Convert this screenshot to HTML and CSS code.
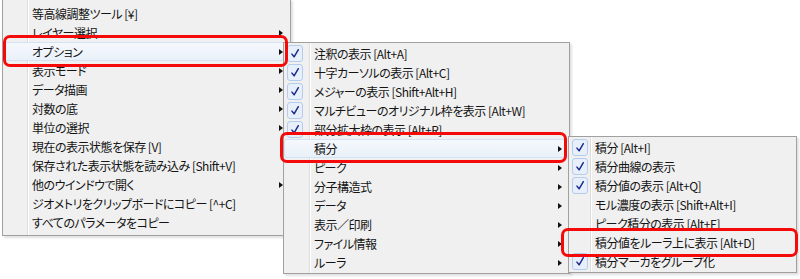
FILE: index.html
```html
<!DOCTYPE html>
<html lang="ja">
<head>
<meta charset="utf-8">
<title>メニュー</title>
<link rel="stylesheet" href="styles.css">
</head>
<body>
<div class="stage">
  <div class="menu m1">
    <div class="item"><span class="gut"></span><span class="label">等高線調整ツール [¥]</span><span></span></div>
    <div class="item"><span class="gut"></span><span class="label">レイヤー選択</span><span class="sub"></span></div>
    <div class="item hot"><span class="gut"></span><span class="label">オプション</span><span class="sub"></span></div>
    <div class="item"><span class="gut"></span><span class="label">表示モード</span><span class="sub"></span></div>
    <div class="item"><span class="gut"></span><span class="label">データ描画</span><span class="sub"></span></div>
    <div class="item"><span class="gut"></span><span class="label">対数の底</span><span class="sub"></span></div>
    <div class="item"><span class="gut"></span><span class="label">単位の選択</span><span class="sub"></span></div>
    <div class="item"><span class="gut"></span><span class="label">現在の表示状態を保存 [V]</span><span></span></div>
    <div class="item"><span class="gut"></span><span class="label">保存された表示状態を読み込み [Shift+V]</span><span></span></div>
    <div class="item"><span class="gut"></span><span class="label">他のウインドウで開く</span><span class="sub"></span></div>
    <div class="item"><span class="gut"></span><span class="label">ジオメトリをクリップボードにコピー [^+C]</span><span></span></div>
    <div class="item"><span class="gut"></span><span class="label">すべてのパラメータをコピー</span><span></span></div>
  </div>

  <div class="menu m2">
    <div class="item"><span class="gut"><span class="chk"><svg viewBox="0 0 16 17"><path d="M4.5 9.2 L7 12.3 L11.8 4.2"/></svg></span></span><span class="label">注釈の表示 [Alt+A]</span><span></span></div>
    <div class="item"><span class="gut"><span class="chk"><svg viewBox="0 0 16 17"><path d="M4.5 9.2 L7 12.3 L11.8 4.2"/></svg></span></span><span class="label">十字カーソルの表示 [Alt+C]</span><span></span></div>
    <div class="item"><span class="gut"><span class="chk"><svg viewBox="0 0 16 17"><path d="M4.5 9.2 L7 12.3 L11.8 4.2"/></svg></span></span><span class="label">メジャーの表示 [Shift+Alt+H]</span><span></span></div>
    <div class="item"><span class="gut"><span class="chk"><svg viewBox="0 0 16 17"><path d="M4.5 9.2 L7 12.3 L11.8 4.2"/></svg></span></span><span class="label">マルチビューのオリジナル枠を表示 [Alt+W]</span><span></span></div>
    <div class="item"><span class="gut"><span class="chk"><svg viewBox="0 0 16 17"><path d="M4.5 9.2 L7 12.3 L11.8 4.2"/></svg></span></span><span class="label">部分拡大枠の表示 [Alt+R]</span><span></span></div>
    <div class="item hot"><span class="gut"></span><span class="label">積分</span><span class="sub"></span></div>
    <div class="item"><span class="gut"></span><span class="label">ピーク</span><span class="sub"></span></div>
    <div class="item"><span class="gut"></span><span class="label">分子構造式</span><span class="sub"></span></div>
    <div class="item"><span class="gut"></span><span class="label">データ</span><span class="sub"></span></div>
    <div class="item"><span class="gut"></span><span class="label">表示／印刷</span><span class="sub"></span></div>
    <div class="item"><span class="gut"></span><span class="label">ファイル情報</span><span class="sub"></span></div>
    <div class="item"><span class="gut"></span><span class="label">ルーラ</span><span class="sub"></span></div>
  </div>

  <div class="menu m3">
    <div class="item"><span class="gut"><span class="chk"><svg viewBox="0 0 16 17"><path d="M4.5 9.2 L7 12.3 L11.8 4.2"/></svg></span></span><span class="label">積分 [Alt+I]</span><span></span></div>
    <div class="item"><span class="gut"><span class="chk"><svg viewBox="0 0 16 17"><path d="M4.5 9.2 L7 12.3 L11.8 4.2"/></svg></span></span><span class="label">積分曲線の表示</span><span></span></div>
    <div class="item"><span class="gut"><span class="chk"><svg viewBox="0 0 16 17"><path d="M4.5 9.2 L7 12.3 L11.8 4.2"/></svg></span></span><span class="label">積分値の表示 [Alt+Q]</span><span></span></div>
    <div class="item"><span class="gut"></span><span class="label">モル濃度の表示 [Shift+Alt+I]</span><span></span></div>
    <div class="item"><span class="gut"></span><span class="label">ピーク積分の表示 [Alt+E]</span><span></span></div>
    <div class="item"><span class="gut"></span><span class="label">積分値をルーラ上に表示 [Alt+D]</span><span></span></div>
    <div class="item"><span class="gut"><span class="chk"><svg viewBox="0 0 16 17"><path d="M4.5 9.2 L7 12.3 L11.8 4.2"/></svg></span></span><span class="label">積分マーカをグループ化</span><span></span></div>
  </div>

  <div class="mark mark1"></div>
  <div class="mark mark2"></div>
  <div class="mark mark3"></div>
</div>
</body>
</html>
```

FILE: styles.css
```css
html, body {
  margin: 0;
  padding: 0;
  background: #ffffff;
}

.stage {
  position: relative;
  width: 800px;
  height: 279px;
  overflow: hidden;
  background: #ffffff;
  font-family: "Noto Sans CJK JP", "Noto Sans", sans-serif;
  font-size: 12px;
  font-feature-settings: "palt";
  letter-spacing: -0.5px;
  color: #141414;
}

.menu {
  position: absolute;
  box-sizing: border-box;
  border: 1px solid #a0a0a0;
  padding: 1px 0;
  background:
    linear-gradient(#dcdddd, #dcdddd) no-repeat var(--sep) 0 / 1px 100%,
    linear-gradient(#ffffff, #ffffff) no-repeat calc(var(--sep) + 1px) 0 / 1px 100%,
    #f0f0f0;
  box-shadow: 2px 2px 2px rgba(0, 0, 0, 0.12);
  display: flex;
  flex-direction: column;
}

.m1 {
  left: 2px;
  top: -1px;
  width: 289px;
  padding: 4px 0 3px;
  --sep: 24px;
  --gut: 29px;
}

.m2 {
  left: 283px;
  top: 42px;
  width: 287px;
  --sep: 25px;
  --gut: 30px;
}

.m3 {
  left: 568px;
  top: 136px;
  width: 229px;
  --sep: 21px;
  --gut: 26px;
}

.item {
  display: grid;
  grid-template-columns: var(--gut) 1fr 11px;
  align-items: center;
  height: 19px;
  line-height: 19px;
  white-space: nowrap;
}

.item.hot {
  background: linear-gradient(#f6f9fd, #e9f0f9);
  box-shadow: inset 0 0 0 1px #d3e2f4;
  border-radius: 3px;
}

.gut {
  display: flex;
  align-items: center;
  height: 19px;
}

.chk {
  display: block;
  box-sizing: border-box;
  width: 16px;
  height: 17px;
  margin-left: 3px;
  border: 1px solid #b4cdee;
  border-radius: 3px;
  background: #e7effa;
}

.chk svg {
  display: block;
  width: 14px;
  height: 15px;
}

.chk path {
  fill: none;
  stroke: #1b2a8f;
  stroke-width: 1.7;
  stroke-linecap: round;
  stroke-linejoin: round;
}

.label {
  overflow: hidden;
}

.sub {
  width: 0;
  height: 0;
  border-left: 4px solid #111111;
  border-top: 3.5px solid transparent;
  border-bottom: 3.5px solid transparent;
}

.mark {
  position: absolute;
  box-sizing: border-box;
  border: 3.5px solid #f50a0a;
  border-radius: 7px;
}

.mark1 {
  left: 3px;
  top: 35px;
  width: 285px;
  height: 32px;
}

.mark2 {
  left: 280px;
  top: 132px;
  width: 287px;
  height: 31px;
}

.mark3 {
  left: 561px;
  top: 228px;
  width: 237px;
  height: 29px;
}
```
